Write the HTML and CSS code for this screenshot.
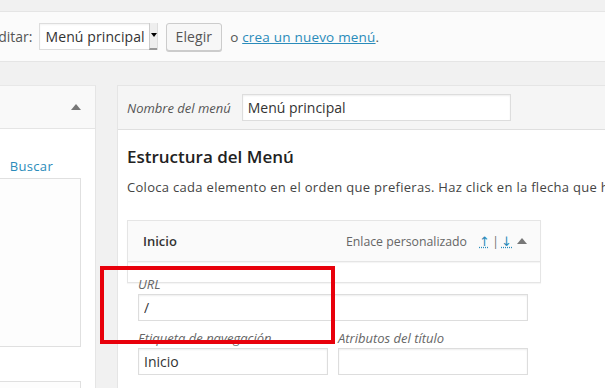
FILE: index.html
```html
<!DOCTYPE html>
<html lang="es">
<head>
  <meta charset="UTF-8" />
  <title>Menús</title>
  <link rel="stylesheet" href="styles.css">
</head>
<body>
  <div class="manage-menus">
    <span class="select-label">Selecciona el menú a editar:</span>
    <div class="fake-select">
      <span>Menú principal</span>
      <span class="select-arrow"></span>
    </div>
    <button class="button">Elegir</button>
    <span class="or-text">o <a href="#">crea un nuevo menú</a>.</span>
  </div>

  <div class="nav-menus">
    <div class="side-col">
      <div class="side-head"><span class="tri"></span></div>
      <div class="side-body">
        <a class="search-link" href="#">Buscar</a>
        <div class="results-box"></div>
        <div class="results-box second"></div>
      </div>
    </div>

    <div class="menu-col">
      <div class="menu-head">
        <label class="menu-name-label">Nombre del menú</label>
        <input class="menu-name" type="text" value="Menú principal">
      </div>
      <div class="menu-body">
        <h3 class="structure-title">Estructura del Menú</h3>
        <p class="structure-desc">Coloca cada elemento en el orden que prefieras. Haz click en la flecha que hay a la derecha del elemento para mostrar más opciones de configuración.</p>

        <div class="menu-item">
          <div class="item-bar">
            <span class="item-title">Inicio</span>
            <span class="item-type">Enlace personalizado</span>
            <span class="item-order"><a href="#">↑</a>|<a href="#">↓</a></span>
            <span class="tri"></span>
          </div>
          <div class="item-settings"></div>
        </div>

        <div class="fields">
          <div class="field wide">
            <label>URL</label>
            <input type="text" value="/">
          </div>
          <div class="field-row">
            <div class="field">
              <label>Etiqueta de navegación</label>
              <input type="text" value="Inicio">
            </div>
            <div class="field">
              <label>Atributos del título</label>
              <input type="text" value="">
            </div>
          </div>
        </div>
      </div>
    </div>
  </div>

  <!-- annotation box -->
  <div class="highlight"></div>
</body>
</html>
```

FILE: styles.css
```css
html, body {
    margin: 0;
    padding: 0;
}
body {
    background: #f1f1f1;
    font-family: "Open Sans", "DejaVu Sans", sans-serif;
    font-size: 13px;
    color: #444;
    width: 605px;
    height: 388px;
    overflow: hidden;
    position: relative;
}
a {
    color: #2a8bba;
}

/* top bar */
.manage-menus {
    margin-top: 11px;
    height: 49px;
    background: #fbfbfb;
    border-top: 1px solid #e5e5e5;
    border-bottom: 1px solid #e5e5e5;
    display: flex;
    align-items: center;
    margin-left: -150px;
    font-size: 14px;
    color: #555;
}
.select-label {
    margin-right: 6px;
}
.fake-select {
    width: 119px;
    height: 27px;
    border: 1px solid #ddd;
    background: #fff;
    display: flex;
    align-items: center;
    justify-content: space-between;
    padding-left: 6px;
    box-sizing: border-box;
    color: #333;
    letter-spacing: 0.1px;
    box-shadow: inset 0 1px 2px rgba(0,0,0,0.05);
}
.select-arrow {
    width: 8px;
    height: 27px;
    background: #eee;
    border-left: 1px solid #ccc;
    border-bottom: 2px solid #999;
    box-sizing: border-box;
    position: relative;
}
.select-arrow::after {
    content: "";
    position: absolute;
    left: 1px;
    top: 10px;
    border-left: 3px solid transparent;
    border-right: 3px solid transparent;
    border-top: 4px solid #000;
}
.button {
    margin-left: 8px;
    height: 28px;
    padding: 0 9px;
    font-family: inherit;
    font-size: 14px;
    letter-spacing: 0.1px;
    color: #555;
    background: #f7f7f7;
    border: 1px solid #ccc;
    border-radius: 3px;
    box-shadow: 0 1px 0 #ccc;
}
.or-text {
    margin-left: 8px;
    font-size: 13.5px;
    letter-spacing: 0.2px;
}

/* columns */
.nav-menus {
    display: flex;
    gap: 21px;
    margin-top: 23px;
    align-items: flex-start;
}
.side-col {
    width: 300px;
    margin-left: -206px;
    flex-shrink: 0;
    background: #fff;
    border: 1px solid #e5e5e5;
    border-top-color: #e8e8e8;
}
.side-head {
    height: 42px;
    background: #f9f9f9;
    border-bottom: 1px solid #e5e5e5;
    display: flex;
    align-items: center;
    justify-content: flex-end;
    padding-right: 14px;
}
.tri {
    border-left: 5px solid transparent;
    border-right: 5px solid transparent;
    border-bottom: 6px solid #777;
    width: 0;
    height: 0;
}
.side-body {
    padding: 28px 14px 0 0;
    display: flex;
    flex-direction: column;
    align-items: flex-end;
    height: 300px;
}
.search-link {
    text-decoration: none;
    font-size: 13px;
    letter-spacing: 0.3px;
    margin-right: 28px;
    line-height: 18px;
}
.results-box {
    flex-shrink: 0;
    width: 287px;
    height: 167px;
    margin-top: 3px;
    border: 1px solid #e0e0e0;
    background: #fdfdfd;
}
.results-box.second {
    margin-top: 34px;
}

.menu-col {
    flex-shrink: 0;
    width: 600px;
    background: #fff;
    border: 1px solid #e5e5e5;
    height: 320px;
}
.menu-head {
    height: 43px;
    background: #f5f5f5;
    border-bottom: 1px solid #dfdfdf;
    display: flex;
    align-items: center;
    padding-left: 9px;
}
.menu-name-label {
    font-style: italic;
    color: #555;
    margin-right: 11px;
}
.menu-name {
    width: 269px;
    height: 27px;
    box-sizing: border-box;
    border: 1px solid #ddd;
    font-family: inherit;
    font-size: 14px;
    color: #333;
    padding: 0 5px;
    box-shadow: inset 0 1px 2px rgba(0,0,0,0.07);
}
.menu-body {
    padding: 0 0 0 9px;
}
.structure-title {
    margin: 15px 0 0;
    font-size: 17px;
    font-weight: 600;
    color: #222;
    line-height: 24px;
}
.structure-desc {
    margin: 8px 0 0;
    font-size: 13px;
    letter-spacing: 0.3px;
    line-height: 20px;
    white-space: nowrap;
    color: #444;
}
.menu-item {
    margin-top: 23px;
    width: 414px;
}
.item-bar {
    height: 40px;
    background: #fafafa;
    border: 1px solid #e5e5e5;
    box-shadow: 0 1px 1px rgba(0,0,0,0.04);
    display: flex;
    align-items: center;
    padding: 0 13px 0 15px;
}
.item-title {
    font-weight: 600;
    color: #333;
    flex: 1;
}
.item-type {
    color: #666;
    font-size: 12.3px;
}
.item-order {
    margin-left: 10px;
    margin-right: 3px;
    color: #777;
}
.item-order a {
    text-decoration: underline dotted;
    margin: 0 2px;
}
.item-settings {
    height: 20px;
    border: 1px solid #e5e5e5;
    border-top: none;
    box-shadow: 0 1px 1px rgba(0,0,0,0.04);
}
.fields {
    margin-top: -9px;
    padding-left: 11px;
    width: 390px;
}
.fields label {
    display: block;
    font-style: italic;
    color: #666;
    line-height: 20px;
}
.fields input {
    display: block;
    width: 100%;
    height: 27px;
    box-sizing: border-box;
    border: 1px solid #ddd;
    font-family: inherit;
    font-size: 14px;
    color: #333;
    padding: 0 5px;
    box-shadow: inset 0 1px 2px rgba(0,0,0,0.07);
}
.field-row {
    display: flex;
    gap: 10px;
    margin-top: 7px;
}
.field-row .field {
    width: 190px;
}

.highlight {
    position: absolute;
    left: 100px;
    top: 266px;
    width: 235px;
    height: 78px;
    box-sizing: border-box;
    border: 4px solid #e8000b;
}
```
